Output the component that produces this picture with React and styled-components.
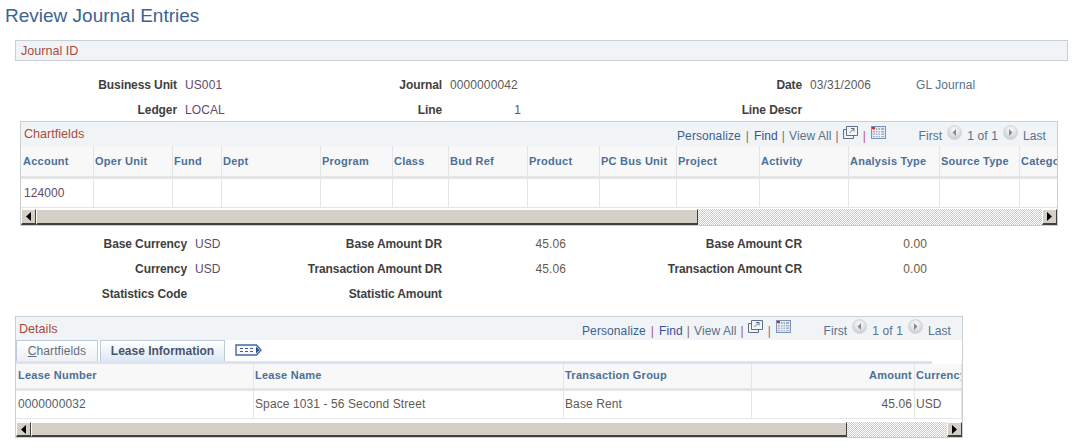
import React from "react";
import styled, { createGlobalStyle } from "styled-components";

const GlobalStyle = createGlobalStyle`
  html, body {
    margin: 0;
    padding: 0;
    background: #ffffff;
    font-family: "Liberation Sans", Arial, sans-serif;
  }
`;

const chartCols = [
  { label: "Account", w: 73, value: "124000" },
  { label: "Oper Unit", w: 79 },
  { label: "Fund", w: 49 },
  { label: "Dept", w: 99 },
  { label: "Program", w: 72 },
  { label: "Class", w: 56 },
  { label: "Bud Ref", w: 79 },
  { label: "Product", w: 72 },
  { label: "PC Bus Unit", w: 77 },
  { label: "Project", w: 83 },
  { label: "Activity", w: 89 },
  { label: "Analysis Type", w: 91 },
  { label: "Source Type", w: 80 },
  { label: "Category", w: 40 },
];

const leaseCols = [
  { label: "Lease Number", w: 238, value: "0000000032" },
  { label: "Lease Name", w: 310, value: "Space 1031 - 56 Second Street" },
  { label: "Transaction Group", w: 188, value: "Base Rent" },
  { label: "Amount", w: 163, value: "45.06", right: true },
  { label: "Currency", w: 47, value: "USD" },
];

const Page = styled.div`
  width: 1074px;
  height: 448px;
  overflow: hidden;
  box-sizing: border-box;
  padding: 5px 0 0 5px;
`;

const Title = styled.h1`
  margin: 0;
  font-size: 19px;
  line-height: 21px;
  font-weight: 400;
  color: #3d6390;
`;

const JournalBar = styled.div`
  margin: 14px 0 0 10px;
  height: 18px;
  width: 1046px;
  background: #f0f4f6;
  border: 1px solid #c9cfd3;
  font-size: 12.6px;
  line-height: 19px;
  padding: 1px 0 0 5px;
  color: #ab4a3c;
`;

const FieldRows = styled.div`
  display: grid;
  grid-template-columns: ${(p) => p.$cols};
  grid-auto-rows: 25px;
  margin: ${(p) => p.$margin};
  font-size: 12px;
  line-height: 25px;
`;

const Label = styled.div`
  text-align: right;
  font-weight: 700;
  letter-spacing: -0.1px;
  color: #3f3f3f;
  padding-right: 8px;
  white-space: nowrap;
`;

const Value = styled.div`
  color: ${(p) => p.$color || "#5f4a6e"};
  letter-spacing: 0.1px;
  text-align: ${(p) => (p.$right ? "right" : "left")};
  white-space: nowrap;
`;

const GridBox = styled.section`
  box-sizing: border-box;
  width: ${(p) => p.$width}px;
  margin-left: ${(p) => p.$left}px;
  border: 1px solid #c9cfd3;
  overflow: hidden;
`;

const GridHead = styled.div`
  display: flex;
  align-items: center;
  height: ${(p) => p.$h}px;
  background: #f0f4f6;
  font-size: 12.6px;
  color: #ab4a3c;
  padding-left: 3px;
`;

const HeadTitle = styled.span`
  flex: 1;
`;

const Nav = styled.nav`
  box-sizing: border-box;
  display: flex;
  align-items: center;
  font-size: 12px;
  letter-spacing: 0.1px;
  width: 380px;
  padding: 4px 11px 0 0;
  flex: none;
  height: 100%;
`;

const NavLink = styled.span`
  color: ${(p) => p.$color || "#3c5f93"};
`;

const Sep = styled.span`
  color: ${(p) => p.$color || "#a5546f"};
  margin: 0 ${(p) => p.$gap || 4}px;
`;

const Pager = styled.span`
  display: flex;
  align-items: center;
  margin-left: auto;
  gap: 5px;
  color: #5b7089;
`;

const Cols = styled.div`
  display: flex;
  width: max-content;
`;

const HeadCell = styled.div`
  box-sizing: border-box;
  flex: none;
  width: ${(p) => p.$w}px;
  height: ${(p) => p.$h}px;
  line-height: ${(p) => p.$lh}px;
  background: #f8f8f8;
  border-right: 1px solid #e3e5e6;
  border-bottom: 3px solid #e4e6e6;
  padding: 0 ${(p) => (p.$right ? 2 : 0)}px 0 ${(p) => p.$pad}px;
  font-size: 11px;
  letter-spacing: 0.25px;
  font-weight: 700;
  color: #4c6f98;
  white-space: nowrap;
  overflow: hidden;
  text-align: ${(p) => (p.$right ? "right" : "left")};
`;

const BodyCell = styled.div`
  box-sizing: border-box;
  flex: none;
  width: ${(p) => p.$w}px;
  height: ${(p) => p.$h}px;
  line-height: ${(p) => p.$h - 1}px;
  background: #ffffff;
  border-right: 1px solid #e3e5e6;
  border-bottom: 1px solid #e3e5e6;
  padding: 0 ${(p) => (p.$right ? 2 : 0)}px 0 ${(p) => p.$pad}px;
  font-size: 12px;
  letter-spacing: 0.1px;
  color: ${(p) => p.$color};
  white-space: nowrap;
  overflow: hidden;
  text-align: ${(p) => (p.$right ? "right" : "left")};
`;

const ScrollBar = styled.div`
  display: flex;
  align-items: stretch;
  height: ${(p) => p.$h}px;
  margin-top: ${(p) => p.$gap}px;
  box-sizing: border-box;
  background-color: #ffffff;
  background-image: repeating-conic-gradient(#cfcbc4 0 25%, #ffffff 0 50%);
  background-size: 2px 2px;
`;

const ScrollButton = styled.div`
  box-sizing: border-box;
  flex: none;
  width: 15px;
  display: flex;
  align-items: center;
  justify-content: center;
  background: #d4d0c8;
  border-top: 1px solid #ffffff;
  border-left: 1px solid #ffffff;
  border-right: 1px solid #404040;
  border-bottom: 2px solid #404040;
`;

const ScrollThumb = styled(ScrollButton)`
  width: ${(p) => p.$w}px;
`;

const ScrollSpace = styled.div`
  flex: 1;
`;

const TabRow = styled.div`
  display: flex;
  align-items: flex-end;
  height: 21px;
  gap: 2px;
`;

const Tab = styled.div`
  box-sizing: border-box;
  width: ${(p) => p.$w}px;
  height: 21px;
  line-height: 21px;
  text-align: center;
  font-size: 12px;
  letter-spacing: ${(p) => (p.$active ? 0 : 0.1)}px;
  font-weight: ${(p) => (p.$active ? 700 : 400)};
  color: ${(p) => (p.$active ? "#46566d" : "#5f6f7f")};
  background: ${(p) =>
    p.$active
      ? "linear-gradient(#ffffff, #dde8f5)"
      : "linear-gradient(#ffffff, #eef0f2)"};
  border: 1px solid #bccbdd;
  border-bottom: none;
`;

const TabMore = styled.div`
  margin: 0 0 5px 8px;
  display: flex;
`;

const TabRule = styled.div`
  width: 916px;
  height: 3px;
  background: #d9e3f1;
`;

const Icon = styled.svg`
  display: block;
  flex: none;
  margin-bottom: ${(p) => p.$lift || 0}px;
`;

const ScrollArrow = ({ left }) => (
  <Icon width="5" height="9" viewBox="0 0 5 9">
    <path d={left ? "M5 0v9L0 4.5z" : "M0 0v9l5-4.5z"} fill="#000" />
  </Icon>
);

const PagerArrow = ({ left }) => (
  <Icon width="15" height="15" viewBox="0 0 15 15" $lift={8}>
    <defs>
      <radialGradient id="pagerFill" cx="0.5" cy="0.35" r="0.65">
        <stop offset="0" stopColor="#ffffff" />
        <stop offset="1" stopColor="#c6cacd" />
      </radialGradient>
    </defs>
    <circle cx="7.5" cy="7.5" r="7" fill="url(#pagerFill)" stroke="#d6d9db" />
    <path d={left ? "M9 4v7L5.5 7.5z" : "M6 4v7l3.5-3.5z"} fill="#85898d" />
  </Icon>
);

const PopoutIcon = () => (
  <Icon width="15" height="13" viewBox="0 0 15 13" $lift={8}>
    <path d="M3.5 3.5h-3v9h10v-3" fill="none" stroke="#5f6f82" />
    <path d="M3.5 0.5h11v9h-11z" fill="#f4f7fa" stroke="#5f7188" />
    <path d="M6.5 7l4.5-4.5M8 2.5h3v3" fill="none" stroke="#5f7188" />
  </Icon>
);

const DownloadIcon = () => (
  <Icon width="15" height="13" viewBox="0 0 15 13" $lift={8}>
    <rect x="0.5" y="0.5" width="14" height="12" fill="#dfe6ee" stroke="#7a93b8" />
    <rect x="2" y="2" width="11" height="9" fill="#a3b1c6" />
    <path d="M4.5 2v9M7 2v9M9.5 2v9M2 4.5h11M2 7h11M2 9.5h11" stroke="#f0f2f5" />
    <rect x="1" y="1" width="3" height="2" fill="#e3202a" />
  </Icon>
);

const ShowAllIcon = () => (
  <Icon width="27" height="12" viewBox="0 0 27 12">
    <path d="M1 1h20.5l4.5 5-4.5 5H1z" fill="#f6f8fc" stroke="#4a689b" strokeWidth="1.4" />
    <path d="M21 2.5v7l3.5-3.5z" fill="#2f4f86" />
    <path d="M5 4.5h3M10 4.5h3M15 4.5h3M5 7.5h3M10 7.5h3M15 7.5h3" stroke="#3f5f8f" />
  </Icon>
);

const Scroller = ({ thumb, h, gap }) => (
  <ScrollBar $h={h} $gap={gap}>
    <ScrollButton>
      <ScrollArrow left />
    </ScrollButton>
    <ScrollThumb $w={thumb} />
    <ScrollSpace />
    <ScrollButton>
      <ScrollArrow />
    </ScrollButton>
  </ScrollBar>
);

const GridNav = () => (
  <Nav>
    <NavLink>Personalize</NavLink>
    <Sep $gap={5}>|</Sep>
    <NavLink $color="#3a4f9a">Find</NavLink>
    <Sep $color="#8a6a60">|</Sep>
    <NavLink $color="#5b7089">View All</NavLink>
    <Sep>|</Sep>
    <PopoutIcon />
    <Sep $color="#c44f8a" $gap={5}>|</Sep>
    <DownloadIcon />
    <Pager>
      First <PagerArrow left /> 1 of 1 <PagerArrow /> Last
    </Pager>
  </Nav>
);

const App = () => (
  <Page>
    <GlobalStyle />
    <Title>Review Journal Entries</Title>
    <JournalBar>Journal ID</JournalBar>

    <FieldRows $cols="180px 145px 120px 71px 289px 106px 1fr" $margin="12px 0 -2px 0">
      <Label>Business Unit</Label>
      <Value>US001</Value>
      <Label>Journal</Label>
      <Value $color="#5a5a5a">0000000042</Value>
      <Label>Date</Label>
      <Value $color="#5a5a5a">03/31/2006</Value>
      <Value $color="#5b7089">GL Journal</Value>
      <Label>Ledger</Label>
      <Value>LOCAL</Value>
      <Label>Line</Label>
      <Value $color="#5a5a5a" $right>1</Value>
      <Label>Line Descr</Label>
    </FieldRows>

    <GridBox $left={15} $width={1038}>
      <GridHead $h={24}>
        <HeadTitle>Chartfields</HeadTitle>
        <GridNav />
      </GridHead>
      <Cols>
        {chartCols.map((c, i) => (
          <HeadCell key={c.label} $w={c.w} $h={33} $lh={30} $pad={i === 0 ? 2 : 1}>
            {c.label}
          </HeadCell>
        ))}
      </Cols>
      <Cols>
        {chartCols.map((c) => (
          <BodyCell key={c.label} $w={c.w} $h={29} $pad={3} $color="#5f4a6e">
            {c.value}
          </BodyCell>
        ))}
      </Cols>
      <Scroller thumb={662} h={16} gap={1} />
    </GridBox>

    <FieldRows $cols="190px 105px 150px 116px 244px 117px" $margin="6px 0 9px 0">
      <Label>Base Currency</Label>
      <Value>USD</Value>
      <Label>Base Amount DR</Label>
      <Value $color="#6b5a4a" $right>45.06</Value>
      <Label>Base Amount CR</Label>
      <Value $color="#6b5a4a" $right>0.00</Value>
      <Label>Currency</Label>
      <Value>USD</Value>
      <Label>Transaction Amount DR</Label>
      <Value $color="#6b5a4a" $right>45.06</Value>
      <Label>Transaction Amount CR</Label>
      <Value $color="#6b5a4a" $right>0.00</Value>
      <Label>Statistics Code</Label>
      <Value />
      <Label>Statistic Amount</Label>
    </FieldRows>

    <GridBox $left={10} $width={948}>
      <GridHead $h={23}>
        <HeadTitle>Details</HeadTitle>
        <GridNav />
      </GridHead>
      <TabRow>
        <Tab $w={82}>
          <u>C</u>hartfields
        </Tab>
        <Tab $w={125} $active>Lease Information</Tab>
        <TabMore>
          <ShowAllIcon />
        </TabMore>
      </TabRow>
      <TabRule />
      <Cols>
        {leaseCols.map((c, i) => (
          <HeadCell key={c.label} $w={c.w} $h={27} $lh={22} $pad={i === 0 ? 2 : 1} $right={c.right}>
            {c.label}
          </HeadCell>
        ))}
      </Cols>
      <Cols>
        {leaseCols.map((c, i) => (
          <BodyCell
            key={c.label}
            $w={c.w}
            $h={28}
            $pad={i === 0 ? 2 : 1}
            $right={c.right}
            $color={c.label === "Lease Number" ? "#4f5f6e" : "#5f5a55"}
          >
            {c.value}
          </BodyCell>
        ))}
      </Cols>
      <Scroller thumb={816} h={15} gap={3} />
    </GridBox>
  </Page>
);

export default App;
